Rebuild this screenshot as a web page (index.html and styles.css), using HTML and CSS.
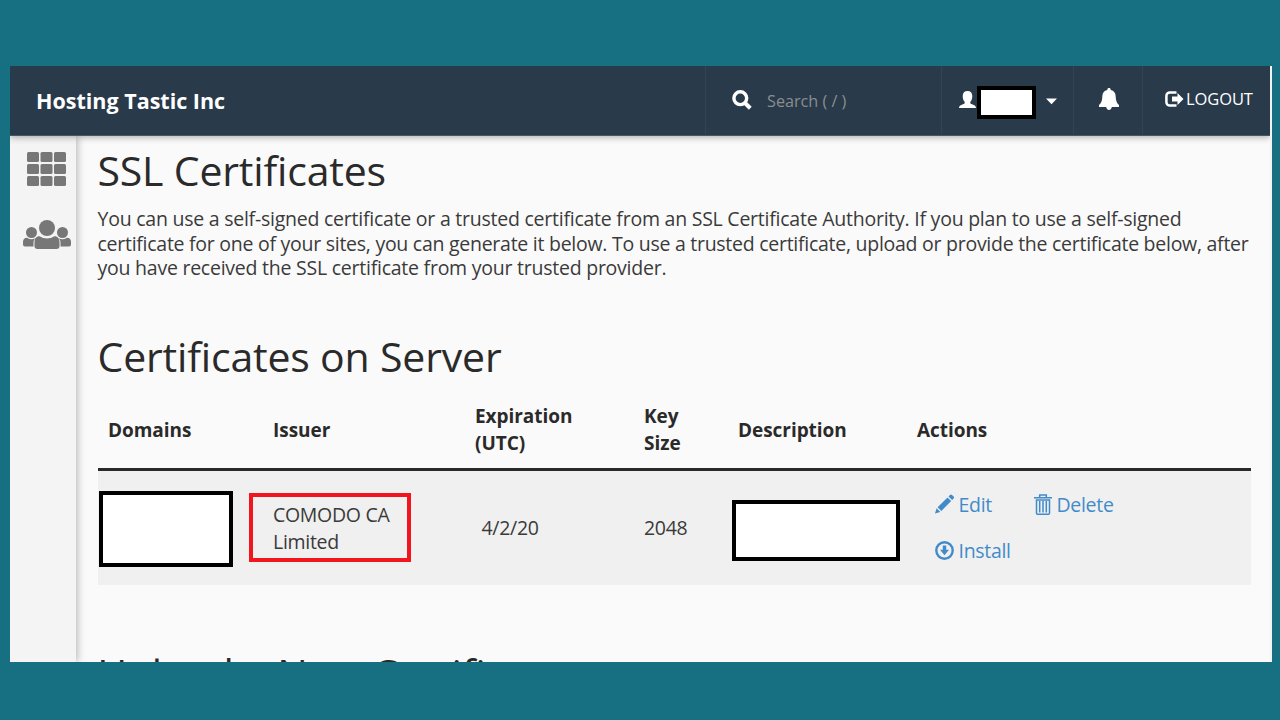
FILE: index.html
```html
<!DOCTYPE html>
<html lang="en">
<head>
<meta charset="utf-8">
<title>SSL Certificates</title>
<link rel="stylesheet" href="styles.css">
</head>
<body>
<div class="window">
  <header class="topbar">
    <div class="brand"><span>Hosting Tastic Inc</span></div>
    <div class="search">
      <svg class="search-icon" width="20" height="20" viewBox="0 0 20 20"><circle cx="8.3" cy="8.2" r="6.4" fill="none" stroke="#fff" stroke-width="3.400"/><path d="M13 13l5.300 5.200" stroke="#fff" stroke-width="4" fill="none"/></svg>
      <span class="search-text">Search ( / )</span>
    </div>
    <div class="user">
      <svg class="user-icon" width="17" height="18" viewBox="0 0 17 18"><path fill="#fff" d="M8.500 0C11.500 0 13.300 1.900 13.300 5c0 2.300-.6 4.500-1.900 5.800-.3 1.300 0 1.900 1 2.300 2.600 1 4.600 1.500 4.600 3.900H0c0-2.400 2-2.900 4.600-3.900 1-.4 1.300-1 1-2.300C4.300 9.500 3.700 7.300 3.700 5c0-3.100 1.800-5 4.800-5z"/></svg>
      <span class="mask user-mask"></span>
      <svg class="caret" width="11" height="7" viewBox="0 0 11 7"><path fill="#fff" d="M0 .5h11L5.500 6.300z"/></svg>
    </div>
    <div class="bell">
      <svg width="20" height="22" viewBox="0 0 20 22"><path fill="#fff" d="M10 0c1 0 1.700.7 1.700 1.600v.5C15 2.900 16.600 5.200 16.700 8.500c.1 4.300 1 6.500 3.300 8.500v2h-7.200c-.3 1.800-1.300 2.900-2.800 2.900S7.500 20.800 7.200 19H0v-2c2.300-2 3.200-4.200 3.300-8.500C3.400 5.200 5 2.900 8.300 2.100v-.5C8.300.7 9 0 10 0z"/></svg>
    </div>
    <div class="logout">
      <svg width="19" height="16" viewBox="0 0 19 16"><path fill="none" stroke="#fff" stroke-width="2.500" d="M11.500 1.400H5A3.500 3.500 0 0 0 1.400 5v6A3.500 3.500 0 0 0 5 14.600h6.500"/><path fill="#fff" d="M7 5.500h5.500V2L18.500 8l-6 6v-3.500H7z"/></svg>
      <span>LOGOUT</span>
    </div>
  </header>
  <div class="body">
    <nav class="sidebar">
      <svg class="grid-icon" width="39" height="34" viewBox="0 0 39 34" fill="#777"><rect x="0" y="0" width="12" height="10" rx="1.500"/><rect x="13.500" y="0" width="12" height="10" rx="1.500"/><rect x="27" y="0" width="12" height="10" rx="1.500"/><rect x="0" y="12" width="12" height="10" rx="1.500"/><rect x="13.500" y="12" width="12" height="10" rx="1.500"/><rect x="27" y="12" width="12" height="10" rx="1.500"/><rect x="0" y="24" width="12" height="10" rx="1.500"/><rect x="13.500" y="24" width="12" height="10" rx="1.500"/><rect x="27" y="24" width="12" height="10" rx="1.500"/></svg>
      <svg class="people-icon" width="48" height="29" viewBox="0 0 48 29" fill="#777"><circle cx="24" cy="8" r="8"/><circle cx="8.500" cy="12.500" r="5.500"/><circle cx="39.500" cy="12.500" r="5.500"/><path d="M16.500 16.300q3.500 2.300 7.500 2.300t7.500-2.300c3.500 0 5 2.500 5 6V26q0 3-3 3h-19q-3 0-3-3v-3.700c0-3.500 1.500-6 5-6z"/><path d="M4 17.800q4.500 2.800 8 .5Q10.500 20.500 10.500 23v3.500H2q-2 0-2-2V22q0-4 4-4.200zM44 17.800q-4.500 2.800-8 .5 1.500 2.200 1.500 4.700v3.500H46q2 0 2-2V22q0-4-4-4.200z"/></svg>
    </nav>
    <main class="content">
      <h1>SSL Certificates</h1>
      <p class="intro">You can use a self-signed certificate or a trusted certificate from an SSL Certificate Authority. If you plan to use a self-signed<br><span class="long">certificate for one of your sites, you can generate it below. To use a trusted certificate, upload or provide the certificate below, after</span><br>you have received the SSL certificate from your trusted provider.</p>
      <h2>Certificates on Server</h2>
      <div class="table">
        <div class="row head">
          <div>Domains</div><div>Issuer</div><div>Expiration<br>(UTC)</div><div>Key<br>Size</div><div>Description</div><div>Actions</div>
        </div>
        <div class="row data">
          <div class="domain"><span class="mask domain-mask"></span></div>
          <div class="issuer"><span class="highlight">COMODO CA<br>Limited</span></div>
          <div class="date">4/2/20</div>
          <div class="key">2048</div>
          <div><span class="mask desc-mask"></span></div>
          <div class="actions">
            <a class="edit"><svg width="19" height="20" viewBox="0 0 19 20" fill="#428bca"><path d="M0 19.500l1.600-5.300 3.700 3.700z"/><path d="M2.600 13.200L12.500 3.400l3.700 3.700-9.900 9.900z"/><path d="M13.500 2.400L15 .9q1-.9 2 0l1.600 1.600q.9 1 0 2l-1.500 1.500z"/></svg><span>Edit</span></a>
            <a class="delete"><svg width="18" height="21" viewBox="0 0 18 21"><path fill="none" stroke="#428bca" stroke-width="1.500" d="M0 3.800h18M5.700 3.500V.9h6.600v2.600M2.500 6v13.200q0 1 1 1h11q1 0 1-1V6zM5.700 7v11.500M9 7v11.500M12.300 7v11.500"/></svg><span>Delete</span></a>
            <a class="install"><svg width="19" height="19" viewBox="0 0 19 19"><circle cx="9.500" cy="9.500" r="8.200" fill="none" stroke="#428bca" stroke-width="2.400"/><path fill="#428bca" d="M7.800 4.500h3.400v4.200h2.800L9.500 14.300 5 8.700h2.800z"/></svg><span>Install</span></a>
          </div>
        </div>
      </div>
      <h2 class="upload">Upload a New Certificate</h2>
    </main>
  </div>
</div>
</body>
</html>
```
FILE: styles.css
```css
* { box-sizing: border-box; }
body {
  margin: 0; width: 1280px; height: 720px; overflow: hidden;
  padding: 66px 8px 58px 10px;
  background: #177081;
  font-family: "Open Sans", "Noto Sans", sans-serif;
  color: #3a3a3a;
}
.window { width: 1262px; height: 596px; overflow: hidden; background: #fafafa; border-right: 2px solid #f3f3f3; }
.topbar {
  display: flex; height: 70px; width: 1260px; position: relative; z-index: 2;
  background: #293a4a; border-bottom: 1px solid #46566b;
  box-shadow: 0 1px 7px rgba(0,0,0,.35); color: #fff;
}
.topbar > div { display: flex; align-items: center; height: 68px; }
.topbar > div + div { border-left: 1px solid #354454; }
.brand { width: 695px; padding-left: 26px; font-size: 21.500px; font-weight: 700; }
.search { width: 236px; padding-left: 26px; }
.search-icon { margin-top: -1px; }
.search-text { margin-left: 15px; font-size: 16.200px; color: #8b8e90; margin-top: 1px; }
.user { width: 132px; padding-left: 17px; }
.mask { display: block; background: #fff; border: 4px solid #000; flex: none; }
.user-mask { width: 59px; height: 33px; margin: 4px 0 0 1px; }
.caret { margin: 3px 0 0 10px; }
.bell { width: 69px; padding-left: 25px; }
.bell svg { margin-top: -3px; }
.logout { width: 128px; padding-left: 22px; font-size: 16.500px; letter-spacing: -.1px; }
.logout svg { margin-top: -2px; }
.logout span { margin: -3px 0 0 2px; }
.body { display: flex; height: 526px; }
.sidebar {
  width: 66px; flex: none; background: #f4f4f4; display: flex; flex-direction: column;
  padding: 15.500px 0 0 12.500px; box-shadow: 1px 0 8px rgba(0,0,0,.3);
}
.grid-icon { margin-left: 4.500px; }
.people-icon { margin-top: 34.500px; }
.content { padding: 0 20px 0 21.500px; width: 1194px; flex: none; white-space: nowrap; }
h1, h2 { margin: 0; font-weight: 400; font-size: 41px; line-height: 56px; letter-spacing: -.18px; color: #2a2a2a; }
h1 { margin-top: 6px; }
.intro { margin: 9px 0 0; font-size: 19.500px; line-height: 24.500px; letter-spacing: -.24px; }
.long { letter-spacing: -.265px; }
h2 { margin-top: 47.500px; }
.table { margin: 8px 0 0 .5px; width: 1153px; font-size: 19.500px; line-height: 27px; letter-spacing: -.3px; }
.row { display: grid; grid-template-columns: 165px 202px 169px 94px 179px 333px; padding-left: 10px; align-items: center; }
.head { height: 79px; font-weight: 700; font-size: 19px; letter-spacing: -.05px; border-bottom: 3px solid #2b2828; color: #2a2a2a; }
.data { height: 114px; background: #f0f0f0; }
.domain-mask { width: 134px; height: 76px; margin: 2px 0 0 -9px; }
.highlight { display: block; width: 162px; height: 69px; margin: -2px 0 0 -24px; border: 4px solid #f1161d; padding: 4px 0 0 20px; }
.date { padding-left: 6.500px; }
.date, .key { margin-top: -1px; }
.desc-mask { width: 168px; height: 61px; margin: 4px 0 0 -6px; }
.actions { display: grid; grid-template-columns: 99px 120px; row-gap: 19px; margin-top: -2px; padding-left: 17.500px; color: #428bca; }
.actions a { display: flex; align-items: center; }
.actions span { margin-left: 5px; }
.upload { margin-top: 61px; font-size: 40.500px; letter-spacing: 0; }
```
